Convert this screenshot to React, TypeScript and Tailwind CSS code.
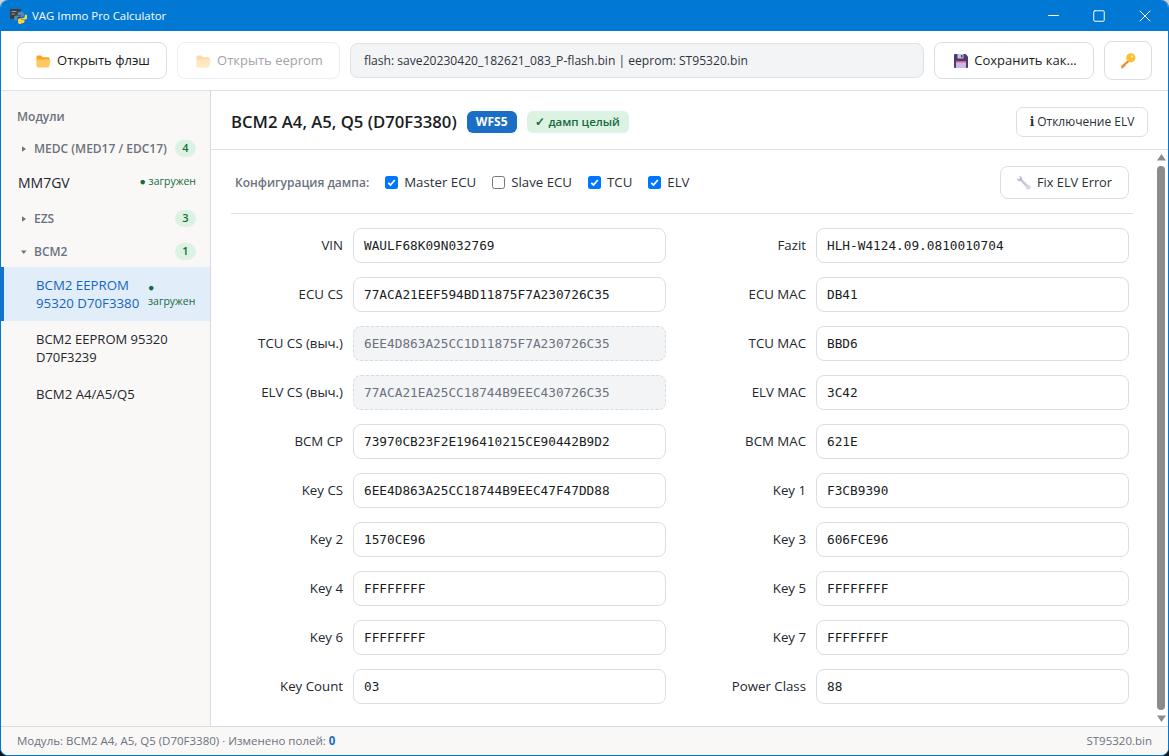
import { Minus, Square, X } from "lucide-react";

const UI = "font-['Open_Sans','Noto_Sans',sans-serif]";

const leftFields = [
  { label: "VIN", value: "WAULF68K09N032769" },
  { label: "ECU CS", value: "77ACA21EEF594BD11875F7A230726C35" },
  { label: "TCU CS (выч.)", value: "6EE4D863A25CC1D11875F7A230726C35", computed: true },
  { label: "ELV CS (выч.)", value: "77ACA21EA25CC18744B9EEC430726C35", computed: true },
  { label: "BCM CP", value: "73970CB23F2E196410215CE90442B9D2" },
  { label: "Key CS", value: "6EE4D863A25CC18744B9EEC47F47DD88" },
  { label: "Key 2", value: "1570CE96" },
  { label: "Key 4", value: "FFFFFFFF" },
  { label: "Key 6", value: "FFFFFFFF" },
  { label: "Key Count", value: "03" },
];

const rightFields = [
  { label: "Fazit", value: "HLH-W4124.09.0810010704" },
  { label: "ECU MAC", value: "DB41" },
  { label: "TCU MAC", value: "BBD6" },
  { label: "ELV MAC", value: "3C42" },
  { label: "BCM MAC", value: "621E" },
  { label: "Key 1", value: "F3CB9390" },
  { label: "Key 3", value: "606FCE96" },
  { label: "Key 5", value: "FFFFFFFF" },
  { label: "Key 7", value: "FFFFFFFF" },
  { label: "Power Class", value: "88" },
];

const FolderIcon = ({ faded }: { faded?: boolean }) => (
  <svg width="15" height="13" viewBox="0 0 15 13" className={faded ? "opacity-40" : ""}>
    <path d="M0.5 2c0-.8.6-1.4 1.4-1.4h3.3l1.6 1.6h5.3c.8 0 1.4.6 1.4 1.4V6H.5z" fill="#f5a623" />
    <path d="M.5 11.3V5.6c0-.6.5-1.1 1.1-1.1h11.8c.7 0 1.2.6 1 1.3l-1.2 5.6c-.1.6-.6 1-1.2 1H1.9c-.8 0-1.4-.5-1.4-1.1z" fill="#ffc860" />
  </svg>
);

const FloppyIcon = () => (
  <svg width="14" height="14" viewBox="0 0 14 14">
    <path d="M0 1a1 1 0 0 1 1-1h10.5L14 2.5V13a1 1 0 0 1-1 1H1a1 1 0 0 1-1-1z" fill="#4b3a78" />
    <rect x="3.5" y="0" width="6" height="4.5" fill="#c9c2dc" />
    <rect x="7" y="1" width="1.5" height="2.5" fill="#4b3a78" />
    <rect x="2" y="7" width="10" height="7" fill="#cdb9e6" />
    <rect x="2" y="7" width="10" height="1.5" fill="#e0607e" />
  </svg>
);

const KeyIcon = () => (
  <svg width="18" height="18" viewBox="0 0 18 18">
    <path d="M9.5 7.5 2 14.2l.6 2.3 1.8-.3.3-1.5 1.5-.2.4-1.6 4.8-4.2z" fill="#f08c2e" />
    <circle cx="11.8" cy="5.8" r="4.6" fill="#fbc02d" />
    <circle cx="13" cy="4.6" r="1.2" fill="#fde9a8" />
  </svg>
);

const WrenchIcon = () => (
  <svg width="14" height="14" viewBox="0 0 14 14">
    <path d="M3.2 3.2 11 11" stroke="#cbc4da" strokeWidth="2.6" />
    <path d="M0.300 1.800 2 3.400 3.500 2 1.900.3C3.600-.3 5.200.9 5 2.800 4.900 4.300 3.300 5.400 1.900 4.900.600 4.400 0 3.100.300 1.800z" fill="#b9b2cc" />
    <circle cx="11.300" cy="11.300" r="2.300" fill="#dad4e6" />
  </svg>
);

const PythonIcon = () => (
  <svg width="17" height="16" viewBox="0 0 17 16">
    <rect x="0" y="1" width="11" height="10" rx="1" fill="#3d3d3d" />
    <rect x="1.500" y="3" width="5" height="1" fill="#9a9a9a" />
    <rect x="1.500" y="5.500" width="3.500" height="1" fill="#9a9a9a" />
    <path d="M11 3.500c-2.200 0-3.500.7-3.500 2V7h3.600v.6H6.200C5 7.600 4 8.500 4 10c0 1.400.9 2.300 2 2.300h1.200v-1.500c0-1.100 1-2 2.200-2h2.900c1 0 1.700-.8 1.700-1.800V5.500c0-1.300-1.300-2-3-2z" fill="#4b8bbe" />
    <path d="M11 15.500c2.200 0 3.500-.7 3.500-2V12h-3.600v-.6h4.900c1.200 0 2.200-.9 2.200-2.400 0-1.400-.9-2.300-2-2.300h-1.200v1.500c0 1.100-1 2-2.200 2H9.700c-1 0-1.700.8-1.700 1.800v2c0 1.300 1.300 2.500 3 2.500z" fill="#ffd43b" />
  </svg>
);

const CheckBox = ({ checked }: { checked?: boolean }) =>
  checked ? (
    <span className="flex h-[13px] w-[13px] items-center justify-center rounded-[2.5px] bg-[#0075ff]">
      <svg width="11" height="11" viewBox="0 0 11 11">
        <path d="M2.200 5.800 4.500 8 8.800 3" fill="none" stroke="#fff" strokeWidth="1.800" />
      </svg>
    </span>
  ) : (
    <span className="h-[13px] w-[13px] rounded-[2.5px] border border-[#767676] bg-white" />
  );

const Field = ({ label, value, computed }: { label: string; value: string; computed?: boolean }) => (
  <div className="flex h-[35px] items-center gap-[10px]">
    <span className="w-[112px] shrink-0 pt-px text-right text-[13.25px] text-[#22262e]">{label}</span>
    <div
      className={`flex h-[35px] flex-1 items-center rounded-[8px] border px-[10px] font-['DejaVu_Sans_Mono',monospace] text-[12.75px] ${
        computed
          ? "border-dashed border-[#d9dbe3] bg-[#f3f4f6] text-[#6b7280]"
          : "border-[#dcdee6] bg-white text-[#1a1d24]"
      }`}
    >
      {value}
    </div>
  </div>
);

const Group = ({ name, count, open, mt }: { name: string; count: number; open?: boolean; mt: string }) => (
  <div className={`flex h-[17px] items-center pl-[20px] pr-[14px] ${mt}`}>
    <span className="w-[13px] text-[#6b7280]">
      {open ? (
        <svg width="6" height="6" viewBox="0 0 6 6">
          <path d="M0 1.500h5.500L2.750 5z" fill="#6b7280" />
        </svg>
      ) : (
        <svg width="6" height="6" viewBox="0 0 6 6">
          <path d="M1 .3v5.400L5 3z" fill="#6b7280" />
        </svg>
      )}
    </span>
    <span className="flex-1 text-[12px] font-semibold whitespace-nowrap text-[#6b7280]">{name}</span>
    <span className="flex h-[17px] w-[21px] items-center justify-center rounded-full bg-[#dcf2e3] text-[11px] font-semibold text-[#146c3b]">
      {count}
    </span>
  </div>
);

export default function App() {
  return (
    <div className={`h-[756px] w-[1169px] overflow-hidden bg-gradient-to-b from-[#d0d4d8] to-[#101418] ${UI}`}>
      <div className="flex h-[756px] flex-col overflow-hidden rounded-[8px] border-x border-b border-[#0078d4] bg-white">
        {/* Title bar */}
        <div className="flex h-[31px] shrink-0 items-center bg-[#0078d4] pl-[9px] text-white">
          <PythonIcon />
          <span className="ml-[5px] flex-1 text-[11.4px]">VAG Immo Pro Calculator</span>
          <div className="flex items-center">
            <div className="flex w-[46px] justify-center">
              <Minus size={17} strokeWidth={1.4} />
            </div>
            <div className="flex w-[46px] justify-center">
              <Square size={14} strokeWidth={1.7} />
            </div>
            <div className="flex w-[46px] justify-center">
              <X size={20} strokeWidth={1.2} />
            </div>
          </div>
        </div>

        {/* Toolbar */}
        <div className="flex h-[60px] shrink-0 items-center border-b border-[#dfe0e8] pl-[16px]">
          <button className="flex h-[37px] w-[150px] items-center justify-center gap-[6px] rounded-[8px] border border-[#dcdee6] bg-white pt-px pl-[2px] text-[13px] text-[#1a1d24]">
            <FolderIcon />
            Открыть флэш
          </button>
          <button className="ml-[10px] flex h-[37px] w-[163px] items-center justify-center gap-[6px] rounded-[8px] border border-[#eeeff3] bg-white pt-px pl-[2px] text-[13px] text-[#a3a3a8]">
            <FolderIcon faded />
            Открыть eeprom
          </button>
          <div className="ml-[10px] flex h-[35px] w-[574px] items-center rounded-[8px] border border-[#dfe1e7] bg-[#f3f4f6] px-[13px] pt-px text-[12.1px] text-[#2f343d]">
            flash: save20230420_182621_083_P-flash.bin | eeprom: ST95320.bin
          </div>
          <button className="ml-[10px] flex h-[37px] w-[160px] items-center justify-center gap-[6px] rounded-[8px] border border-[#dcdee6] bg-white pt-px pl-[3px] text-[13px] text-[#1a1d24]">
            <FloppyIcon />
            Сохранить как...
          </button>
          <button className="ml-[10px] flex h-[39px] w-[48px] items-center justify-center rounded-[8px] border border-[#dcdee6] bg-white">
            <KeyIcon />
          </button>
        </div>

        <div className="flex min-h-0 flex-1">
          {/* Sidebar */}
          <aside className="w-[210px] shrink-0 border-r border-[#d8dae3] bg-[#faf8f6] pt-[17px]">
            <div className="pl-[16px] text-[12px] leading-[17px] font-semibold text-[#6b7280]">Модули</div>
            <Group name="MEDC (MED17 / EDC17)" count={4} mt="mt-[15px]" />
            <div className="mt-[15px] flex h-[20px] items-center pr-[14px] pl-[17px]">
              <span className="flex-1 text-[14px] text-[#22262e]">MM7GV</span>
              <span className="text-[10.5px] text-[#146c3b]">● загружен</span>
            </div>
            <Group name="EZS" count={3} mt="mt-[18px]" />
            <Group name="BCM2" count={1} open mt="mt-[16px]" />
            <div className="mt-[7px] flex h-[54px] items-center border-l-[3px] border-[#1a6fc9] bg-[#e1edf9] pr-[14px] pl-[32px]">
              <span className="w-[112px] shrink-0 text-[13.25px] leading-[18px] font-medium text-[#1565c0]">
                BCM2 EEPROM 95320 D70F3380
              </span>
              <span className="text-[10.5px] leading-[14px] text-[#146c3b]">
                ●
                <br />
                загружен
              </span>
            </div>
            <div className="flex h-[54px] items-center pr-[30px] pl-[35px] text-[13px] leading-[18px] text-[#22262e]">
              BCM2 EEPROM 95320 D70F3239
            </div>
            <div className="flex h-[36px] items-center pt-[3px] pl-[35px] text-[13.2px] text-[#22262e]">BCM2 A4/A5/Q5</div>
          </aside>

          {/* Main panel */}
          <main className="flex min-w-0 flex-1 flex-col">
            <div className="flex h-[59px] shrink-0 items-center border-b border-[#dfe0e8] pt-[4px] pr-[20px] pl-[20px]">
              <h1 className="text-[16.7px] font-semibold text-[#1a1d24]">BCM2 A4, A5, Q5 (D70F3380)</h1>
              <span className="ml-[10px] flex h-[22px] w-[50px] items-center justify-center rounded-[6px] bg-[#1a6fc4] text-[12px] font-bold text-white">
                WFS5
              </span>
              <span className="ml-[10px] flex h-[22px] w-[102px] items-center justify-center rounded-[6px] bg-[#dcf2e3] text-[11.5px] font-semibold text-[#146c3b]">
                ✓ дамп целый
              </span>
              <button className="ml-auto flex h-[30px] w-[132px] items-center justify-center rounded-[7px] border border-[#dcdee6] bg-white text-[12px] text-[#2a2f38]">
                <span className="mr-[3px] font-['DejaVu_Serif',serif] font-bold">i</span>
                Отключение ELV
              </button>
            </div>

            <div className="flex min-h-0 flex-1">
              <div className="min-w-0 flex-1 overflow-hidden pt-[16px] pl-[20px]">
                <div className="w-[902px]">
                  <div className="flex h-[33px] items-center pr-[4px] pl-[4px]">
                    <span className="mr-[16px] pt-px text-[12px] font-semibold text-[#6b7280]">Конфигурация дампа:</span>
                    <label className="flex items-center gap-[6px] text-[13.25px] text-[#2a2f38]">
                      <CheckBox checked />
                      <span className="pt-px">Master ECU</span>
                    </label>
                    <label className="ml-[16px] flex items-center gap-[6px] text-[13.25px] text-[#2a2f38]">
                      <CheckBox />
                      <span className="pt-px">Slave ECU</span>
                    </label>
                    <label className="ml-[16px] flex items-center gap-[6px] text-[13.25px] text-[#2a2f38]">
                      <CheckBox checked />
                      <span className="pt-px">TCU</span>
                    </label>
                    <label className="ml-[16px] flex items-center gap-[6px] text-[13.25px] text-[#2a2f38]">
                      <CheckBox checked />
                      <span className="pt-px">ELV</span>
                    </label>
                    <button className="ml-auto flex h-[33px] w-[129px] items-center justify-center gap-[6px] rounded-[8px] border border-[#dcdee6] bg-white pt-px text-[12.8px] text-[#2a2f38]">
                      <WrenchIcon />
                      Fix ELV Error
                    </button>
                  </div>
                  <div className="mt-[14px] h-px bg-[#dfe0e8]" />
                  <div className="mt-[14px] grid w-[898px] grid-cols-2 gap-x-[28px]">
                    <div className="flex flex-col gap-[14px]">
                      {leftFields.map((f) => (
                        <Field key={f.label} {...f} />
                      ))}
                    </div>
                    <div className="flex flex-col gap-[14px]">
                      {rightFields.map((f) => (
                        <Field key={f.label} {...f} />
                      ))}
                    </div>
                  </div>
                </div>
              </div>

              {/* Scrollbar */}
              <div className="flex w-[13px] shrink-0 flex-col items-center py-[4px] pr-[1px]">
                <svg width="9" height="7" viewBox="0 0 9 7">
                  <path d="M4.500 0 9 6.500H0z" fill="#8b8b8b" />
                </svg>
                <div className="mt-[5px] w-[8px] flex-1 rounded-full bg-[#8b8b8b]" />
                <svg width="9" height="7" viewBox="0 0 9 7" className="mt-[5px]">
                  <path d="M0 .5h9L4.500 7z" fill="#8b8b8b" />
                </svg>
              </div>
            </div>
          </main>
        </div>

        {/* Status bar */}
        <div className="flex h-[29px] shrink-0 items-center justify-between border-t border-[#d8dae3] bg-[#faf8f6] pr-[16px] pl-[16px] text-[11.5px] text-[#6b7280]">
          <span>
            Модуль: BCM2 A4, A5, Q5 (D70F3380) · Изменено полей: <b className="text-[#1a6fc4]">0</b>
          </span>
          <span>ST95320.bin</span>
        </div>
      </div>
    </div>
  );
}
